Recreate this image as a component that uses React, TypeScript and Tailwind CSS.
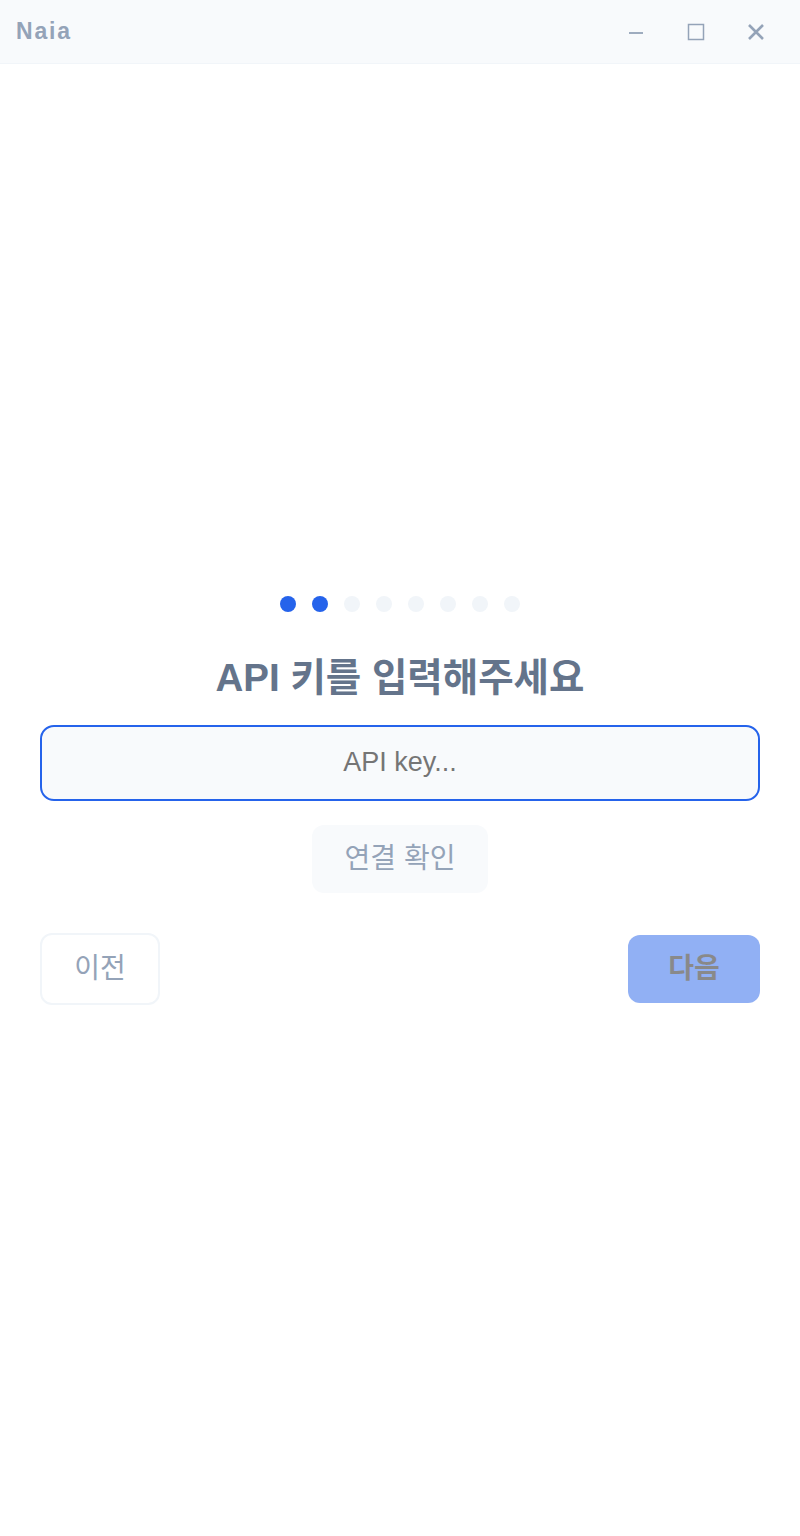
import React from 'react'

function TitleBar() {
  return (
    <div className="h-[64px] flex items-center justify-between bg-[#f8fafc] border-b border-[#f1f5f9] pl-4 pr-[14px]">
      <span className="text-[23px] font-bold tracking-[0.08em] text-[#94a3b8]">Naia</span>
      <div className="flex h-full items-center">
        <button className="w-[60px] h-full flex items-center justify-center text-[#94a3b8]">
          <svg width="16" height="16" viewBox="0 0 16 16">
            <line x1="1" y1="9" x2="15" y2="9" stroke="currentColor" strokeWidth="1.8" />
          </svg>
        </button>
        <button className="w-[60px] h-full flex items-center justify-center text-[#94a3b8]">
          <svg width="18" height="18" viewBox="0 0 18 18">
            <rect x="1.5" y="1.5" width="15" height="15" fill="none" stroke="currentColor" strokeWidth="1.5" />
          </svg>
        </button>
        <button className="w-[60px] h-full flex items-center justify-center text-[#94a3b8]">
          <svg width="18" height="18" viewBox="0 0 18 18">
            <path d="M2 2 L16 16 M16 2 L2 16" stroke="currentColor" strokeWidth="2.6" />
          </svg>
        </button>
      </div>
    </div>
  )
}

function App() {
  const steps = [0, 1, 2, 3, 4, 5, 6, 7]
  return (
    <div
      className="w-[800px] h-[1536px] flex flex-col bg-white"
      style={{ fontFamily: '"Liberation Sans", "Noto Sans CJK KR", sans-serif' }}
    >
      <TitleBar />
      <div className="flex-1 flex flex-col items-center justify-center px-10">
        <div className="flex gap-4">
          {steps.map((i) => (
            <span key={i} className={i < 2 ? 'w-4 h-4 rounded-full bg-[#2563eb]' : 'w-4 h-4 rounded-full bg-[#f1f5f9]'} />
          ))}
        </div>
        <h1 className="mt-[42px] text-[38.5px] leading-[48px] font-bold text-[#64748b]">API 키를 입력해주세요</h1>
        <input
          className="mt-[23px] w-full h-[76px] rounded-[14px] border-2 border-[#2563eb] bg-[#f8fafc] text-center text-[27px] text-[#334155] outline-none placeholder:text-[#757575]"
          placeholder="API key..."
        />
        <button className="mt-6 h-[68px] w-[176px] rounded-xl bg-[#f8fafc] text-[28px] text-[#94a3b8]">연결 확인</button>
        <div className="mt-10 w-full flex items-center justify-between">
          <button className="h-[72px] w-[120px] rounded-xl border-2 border-[#f1f5f9] bg-white text-[28px] text-[#94a3b8]">이전</button>
          <button className="h-[68px] w-[132px] rounded-xl bg-[#2563eb] opacity-50 text-[28px] font-bold text-[#151515]">다음</button>
        </div>
      </div>
    </div>
  )
}

export default App
